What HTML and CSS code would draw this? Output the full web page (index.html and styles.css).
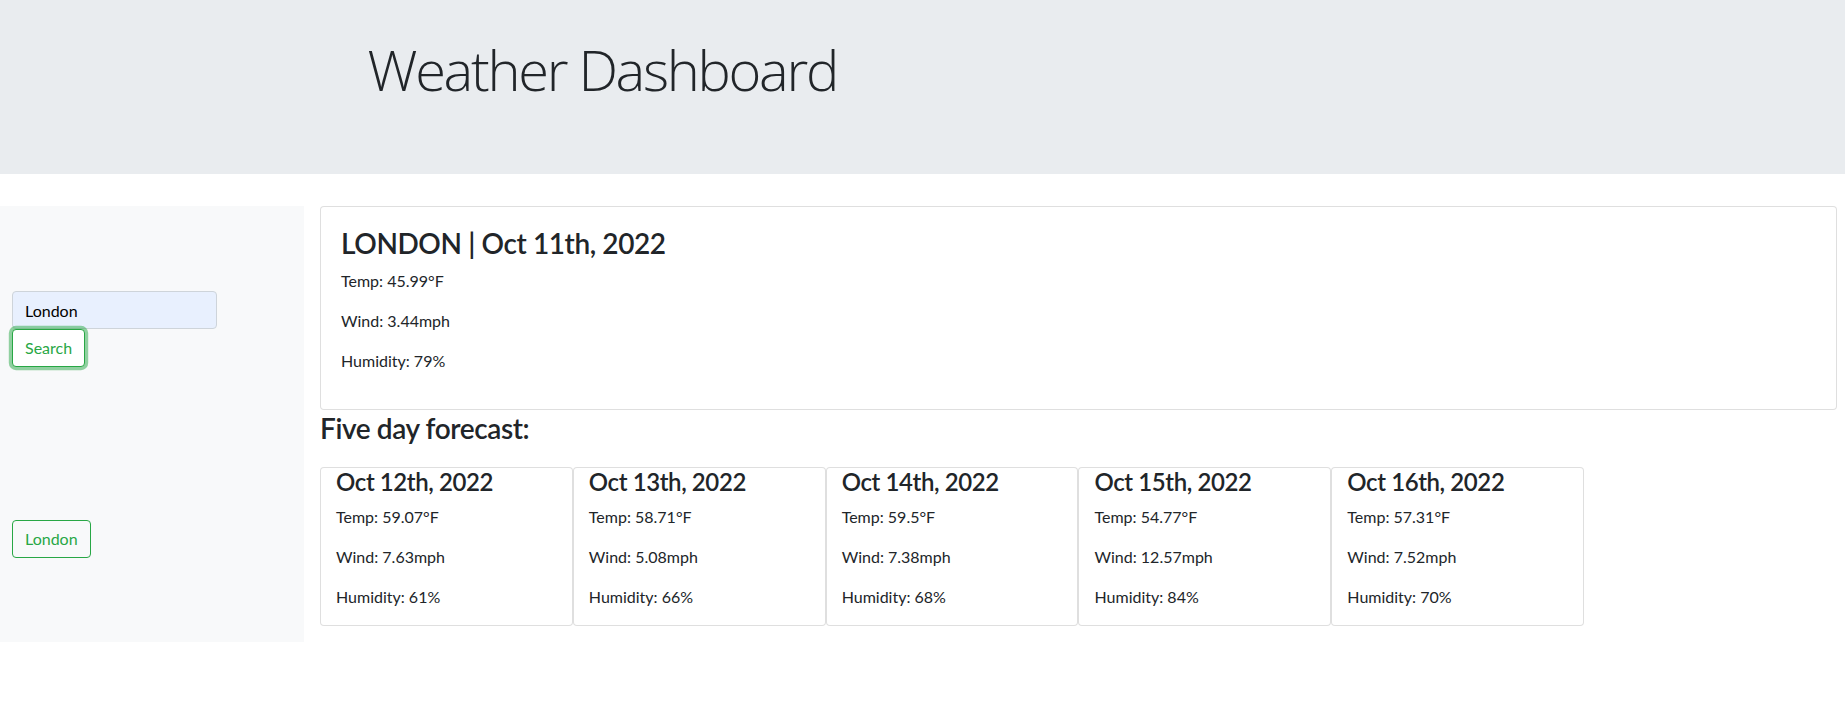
FILE: index.html
```html
<!DOCTYPE html>
<html lang="en">
<head>
<meta charset="utf-8">
<title>Weather Dashboard</title>
<link rel="stylesheet" href="styles.css">
</head>
<body>
<header class="hero">
  <div class="container">
    <h1 class="hero-title">Weather Dashboard</h1>
  </div>
</header>
<div class="layout">
  <aside class="sidebar">
    <form class="search">
      <input class="search-input" type="text" value="London">
      <button class="btn btn-search" type="button">Search</button>
    </form>
    <div class="history">
      <button class="btn btn-history" type="button">London</button>
    </div>
  </aside>
  <main class="content">
    <section class="card current">
      <h3 class="heading">LONDON | Oct 11th, 2022</h3>
      <p class="stat">Temp: 45.99°F</p>
      <p class="stat">Wind: 3.44mph</p>
      <p class="stat">Humidity: 79%</p>
    </section>
    <h3 class="heading forecast-heading">Five day forecast:</h3>
    <div class="forecast-row">
      <div class="card day">
        <h4 class="day-title">Oct 12th, 2022</h4>
        <p class="stat">Temp: 59.07°F</p>
        <p class="stat">Wind: 7.63mph</p>
        <p class="stat">Humidity: 61%</p>
      </div>
      <div class="card day">
        <h4 class="day-title">Oct 13th, 2022</h4>
        <p class="stat">Temp: 58.71°F</p>
        <p class="stat">Wind: 5.08mph</p>
        <p class="stat">Humidity: 66%</p>
      </div>
      <div class="card day">
        <h4 class="day-title">Oct 14th, 2022</h4>
        <p class="stat">Temp: 59.5°F</p>
        <p class="stat">Wind: 7.38mph</p>
        <p class="stat">Humidity: 68%</p>
      </div>
      <div class="card day">
        <h4 class="day-title">Oct 15th, 2022</h4>
        <p class="stat">Temp: 54.77°F</p>
        <p class="stat">Wind: 12.57mph</p>
        <p class="stat">Humidity: 84%</p>
      </div>
      <div class="card day">
        <h4 class="day-title">Oct 16th, 2022</h4>
        <p class="stat">Temp: 57.31°F</p>
        <p class="stat">Wind: 7.52mph</p>
        <p class="stat">Humidity: 70%</p>
      </div>
    </div>
  </main>
</div>
</body>
</html>
```

FILE: styles.css
```css
* {
  box-sizing: border-box;
}

html, body {
  margin: 0;
  padding: 0;
  background: #fff;
}

body {
  font-family: Lato, "Open Sans", sans-serif;
  font-size: 16px;
  line-height: 1.5;
  color: #212529;
}

.hero {
  background: #e9ecef;
  height: 174px;
  padding-top: 36px;
  margin-bottom: 32px;
}

.container {
  max-width: 1140px;
  margin: 0 auto;
  padding: 0 15px;
}

.hero-title {
  margin: 0;
  font-family: "Open Sans", sans-serif;
  font-size: 56px;
  font-weight: 300;
  line-height: 67.2px;
  letter-spacing: -2.3px;
}

.layout {
  display: flex;
  align-items: flex-start;
  gap: 16px;
  padding-right: 8px;
}

.sidebar {
  flex: 0 0 304px;
  background: #f8f9fa;
  padding: 85px 12px 84px 12px;
}

.search {
  display: flex;
  flex-direction: column;
  align-items: flex-start;
  margin: 0;
}

.search-input {
  width: 205px;
  height: 38px;
  padding: 6px 12px;
  font-family: inherit;
  font-size: 16px;
  line-height: 1.5;
  color: #000;
  background: #e8f0fe;
  border: 1px solid #ced4da;
  border-radius: 4px;
  outline: none;
}

.btn {
  display: inline-block;
  height: 38px;
  padding: 6px 12px;
  font-family: inherit;
  font-size: 16px;
  line-height: 1.5;
  color: #28a745;
  background: transparent;
  border: 1px solid #28a745;
  border-radius: 4px;
  cursor: pointer;
}

.btn-search {
  background: #fff;
  box-shadow: 0 0 0 3.2px rgba(40, 167, 69, 0.5);
}

.history {
  margin-top: 153px;
}

.content {
  flex: 1;
  min-width: 0;
}

.card {
  background: #fff;
  border: 1px solid rgba(0, 0, 0, 0.125);
  border-radius: 4px;
}

.current {
  padding: 20px;
}

.heading {
  margin: 0 0 8px;
  font-size: 28px;
  font-weight: 600;
  line-height: 33.6px;
  letter-spacing: -0.4px;
}

.forecast-heading {
  margin-top: 2px;
}

.stat {
  margin: 0 0 16px;
}

.forecast-row {
  display: flex;
  margin-top: 22px;
}

.day {
  flex: 0 0 calc(100% / 6);
  padding: 0 15px;
}

.day-title {
  margin: 0 0 8px;
  font-size: 24px;
  font-weight: 600;
  line-height: 28.8px;
  letter-spacing: -0.4px;
}
```
